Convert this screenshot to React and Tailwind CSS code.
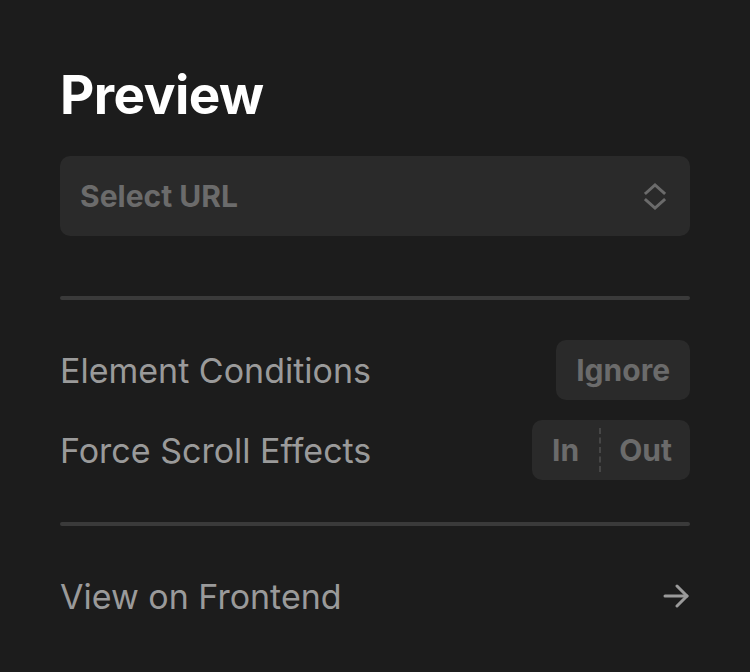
function Chevrons() {
  return (
    <svg width="22" height="28" viewBox="0 0 22 28" fill="none" stroke="#6b6b6b" strokeWidth="3" strokeLinecap="square" strokeLinejoin="miter">
      <path d="M2 11 L11 3 L20 11" />
      <path d="M2 18 L11 26 L20 18" />
    </svg>
  );
}

function Arrow() {
  return (
    <svg width="27" height="24" viewBox="0 0 27 24" fill="none" stroke="#9a9a9a" strokeWidth="3" strokeLinecap="round" strokeLinejoin="round">
      <path d="M2 12 H24" />
      <path d="M14 2 L24 12 L14 22" />
    </svg>
  );
}

export default function App() {
  return (
    <div
      className="min-h-screen bg-[#1c1c1c] px-[60px] pt-[69px]"
      style={{ fontFamily: "Inter, 'Noto Sans', sans-serif" }}
    >
      <h1 className="text-[53px] font-bold leading-none text-white tracking-[-0.01em]">
        Preview
      </h1>

      <div className="mt-[34px] flex h-[80px] items-center justify-between rounded-[10px] bg-[#2a2a2a] pl-[20px] pr-[24px]">
        <span className="text-[30px] font-bold text-[#6b6b6b]">Select URL</span>
        <Chevrons />
      </div>

      <div className="mt-[60px] h-[4px] rounded-full bg-[#3a3a3a]" />

      <div className="mt-[40px] flex h-[60px] items-center justify-between">
        <span className="text-[34px] text-[#9a9a9a]">Element Conditions</span>
        <button className="flex h-[60px] items-center rounded-[10px] bg-[#2a2a2a] px-[20px] text-[30px] font-bold text-[#6b6b6b]">
          Ignore
        </button>
      </div>

      <div className="mt-[20px] flex h-[60px] items-center justify-between">
        <span className="text-[34px] text-[#9a9a9a]">Force Scroll Effects</span>
        <div className="flex h-[60px] items-center rounded-[10px] bg-[#2a2a2a] py-[8px] text-[30px] font-bold text-[#6b6b6b]">
          <span className="px-[20px]">In</span>
          <span className="h-full border-l-2 border-dashed border-[#464646]" />
          <span className="px-[18px]">Out</span>
        </div>
      </div>

      <div className="mt-[42px] h-[4px] rounded-full bg-[#3a3a3a]" />

      <div className="mt-[40px] flex h-[60px] items-center justify-between">
        <span className="text-[34px] text-[#9a9a9a]">View on Frontend</span>
        <Arrow />
      </div>
    </div>
  );
}
